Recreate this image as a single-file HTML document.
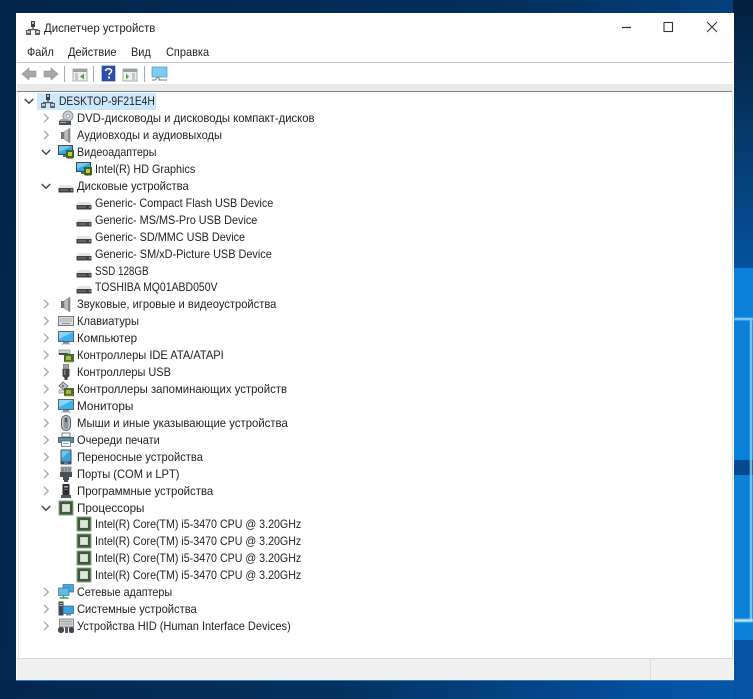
<!DOCTYPE html>
<html lang="ru"><head><meta charset="utf-8"><title>Диспетчер устройств</title>
<style>
html,body{margin:0;padding:0}
body{width:753px;height:699px;overflow:hidden;position:relative;background:linear-gradient(100deg,#03244a 0%,#03305f 60%,#044c94 100%);font:12px "Liberation Sans",sans-serif;color:#222}
.bg{position:absolute}
#win{position:absolute;left:16px;top:13px;width:718px;height:668px;background:#fff}
.t{position:absolute;white-space:nowrap;line-height:16px;height:16px;transform-origin:0 50%}
svg.i{position:absolute;width:16px;height:16px;filter:blur(.35px)}
svg.c{position:absolute;width:8px;height:10px}
.abs{position:absolute}
</style></head><body>
<svg width="0" height="0" style="position:absolute">
<defs>
<symbol id="pc" viewBox="0 0 16 16"><rect x="6" y="1" width="4" height="6" fill="#3a3f46"/><rect x="7" y="2" width="2" height="2" fill="#b8c0c8"/><rect x="7.3" y="7" width="1.4" height="3" fill="#555"/><rect x="3" y="9" width="10" height="1.2" fill="#555"/><rect x="1" y="10" width="5" height="5" fill="#5b6169"/><rect x="10" y="10" width="5" height="5" fill="#5b6169"/><rect x="2" y="11" width="3" height="2" fill="#c8ced4"/><rect x="11" y="11" width="3" height="2" fill="#c8ced4"/></symbol>
<symbol id="dvd" viewBox="0 0 16 16"><circle cx="10" cy="6" r="5" fill="#c9ced2" stroke="#8d9499"/><circle cx="10" cy="6" r="1.6" fill="#f2f4f5" stroke="#858b90" stroke-width=".6"/><path d="M1 11l2-2h7v3H1z" fill="#9aa0a5"/><rect x="1" y="11" width="12" height="4" fill="#4b4f53"/><rect x="2" y="12" width="6" height="1" fill="#a8adb1"/></symbol>
<symbol id="spk" viewBox="0 0 16 16"><path d="M3 5h3v7H3z" fill="#6f7579"/><path d="M6 5l6-4v15l-6-4z" fill="#b7bcc0" stroke="#84898d" stroke-width=".6"/><path d="M10 3v11l2 1.5V2z" fill="#83888c"/></symbol>
<symbol id="vid" viewBox="0 0 16 16"><rect x="0" y="1" width="15" height="10" fill="#3c4a57"/><rect x="1" y="2" width="13" height="8" fill="#35a5e2"/><path d="M1 2h13L1 8z" fill="#77c8ef"/><rect x="5" y="11" width="5" height="2" fill="#5b6d7b"/><rect x="8" y="6" width="8" height="8" fill="#38662f"/><rect x="10" y="8" width="4" height="4" fill="#d6c23d"/><rect x="9" y="14" width="6" height="1" fill="#c2a32d"/></symbol>
<symbol id="hdd" viewBox="0 0 16 16"><path d="M2 7h12l1.500 3v4H.5v-4z" fill="#e3e5e7"/><rect x=".5" y="10" width="15" height="4.500" fill="#3f4347"/><rect x="2" y="11.500" width="8" height="1" fill="#7d8286"/><rect x="13" y="11.500" width="1.500" height="1" fill="#cfd3d5"/></symbol>
<symbol id="kbd" viewBox="0 0 16 16"><rect x=".5" y="3.500" width="15" height="9" fill="#d8dcdf" stroke="#747a7e"/><path d="M2 6h12M2 8h12" stroke="#8d9397" stroke-dasharray="1 .6"/><path d="M4 10.500h8" stroke="#868c90"/></symbol>
<symbol id="mon" viewBox="0 0 16 16"><rect x=".5" y="1.500" width="15" height="10" fill="#3bb2ee" stroke="#5a6670"/><path d="M1 2h14L1 9z" fill="#8cd4f5"/><rect x="5" y="12" width="6" height="1.500" fill="#7e8a93"/><rect x="3" y="13.500" width="10" height="1" fill="#aab2b8"/></symbol>
<symbol id="ide" viewBox="0 0 16 16"><rect x="1" y="3" width="11" height="4" fill="#cdd1d4" stroke="#757b80" stroke-width=".6"/><rect x="1" y="6" width="9" height="2" fill="#44484c"/><rect x="6" y="7" width="10" height="8" fill="#39702f"/><rect x="8" y="9" width="5" height="4" fill="#bcae45"/><path d="M7 15h8" stroke="#c6a62e"/></symbol>
<symbol id="usb" viewBox="0 0 16 16"><rect x="5.500" y="0" width="5" height="5" fill="#9ba1a6" stroke="#555b60" stroke-width=".6"/><path d="M4.500 5h7v7l-2 2v2h-3v-2l-2-2z" fill="#41464a"/><rect x="6" y="6" width="1.500" height="5" fill="#82888d"/></symbol>
<symbol id="sto" viewBox="0 0 16 16"><path d="M1 5l4-4 5 4-4 4z" fill="#c8cdd0" stroke="#4e5458" stroke-width=".8"/><circle cx="5" cy="5" r="1.300" fill="#70767a"/><rect x="1" y="9" width="8" height="3" fill="#d8dbdd" stroke="#666" stroke-width=".5"/><rect x="6" y="7" width="10" height="8" fill="#3b6f33"/><rect x="8" y="9" width="5" height="4" fill="#bca83e"/><path d="M7 15h8" stroke="#c6a62e"/></symbol>
<symbol id="mou" viewBox="0 0 16 16"><rect x="3.500" y=".5" width="9" height="15" rx="4.500" fill="#c5cbcf" stroke="#565c61"/><rect x="5.500" y="2" width="5" height="12" rx="2.500" fill="#8a98a5"/><rect x="7.300" y="3" width="1.400" height="4" fill="#2e3236"/></symbol>
<symbol id="prn" viewBox="0 0 16 16"><rect x="4" y="1" width="8" height="4" fill="#fff" stroke="#5f6569" stroke-width=".8"/><path d="M.5 5.500h15v5h-3V9h-9v1.500h-3z" fill="#4d93ad" stroke="#3e4448" stroke-width=".8"/><rect x="3.500" y="9" width="9" height="5.500" fill="#fff" stroke="#666c70" stroke-width=".8"/><path d="M5 11.500h6" stroke="#9aa"/></symbol>
<symbol id="por" viewBox="0 0 16 16"><rect x="3" y="1" width="10" height="5" fill="#a8adb1" stroke="#62676b" stroke-width=".6"/><path d="M5 2v3M8 2v3M11 2v3" stroke="#5d6267"/><path d="M2 6h12v5h-3v3h-1v2H6v-2H5v-3H2z" fill="#4a4f53"/></symbol>
<symbol id="mob" viewBox="0 0 16 16"><rect x="2.500" y=".5" width="11" height="15" rx="1" fill="#3f4a55"/><rect x="3.500" y="1.500" width="9" height="11" fill="#39a4e0"/><path d="M3.500 1.500h9l-9 8z" fill="#6fc5ee"/><rect x="6" y="13.500" width="4" height="1" fill="#aab"/></symbol>
<symbol id="sw" viewBox="0 0 16 16"><rect x="4.500" y="1" width="7" height="11" fill="#2c3034"/><rect x="6" y="3" width="4" height="1.500" fill="#a9aeb2"/><rect x="6" y="6" width="4" height="1" fill="#6f7478"/><rect x="3" y="12" width="10" height="3" fill="#50565a"/></symbol>
<symbol id="cpu" viewBox="0 0 16 16"><rect x="0.500" y="0.500" width="15" height="15" fill="#8fa08d"/><rect x="1.500" y="1.500" width="13" height="13" fill="#3a5c38"/><rect x="4" y="4" width="8" height="8" fill="#cbd6c7"/><rect x="5" y="5" width="6" height="6" fill="#dfe6dc"/></symbol>
<symbol id="net" viewBox="0 0 16 16"><rect x="5" y="0.500" width="10.500" height="7.500" fill="#3da8e4" stroke="#4a6a80" stroke-width=".7"/><rect x="0.500" y="4" width="10.500" height="7.500" fill="#5cbcec" stroke="#4a6a80" stroke-width=".7"/><path d="M5.500 11.500v2M1.500 14h9" stroke="#3fa34a" stroke-width="1.500"/></symbol>
<symbol id="sys" viewBox="0 0 16 16"><rect x="0.500" y="0.500" width="5" height="14" fill="#42474b"/><rect x="1.500" y="2" width="3" height="1" fill="#b4b9bc"/><rect x="1.500" y="4" width="3" height="1" fill="#b4b9bc"/><rect x="5" y="5" width="10.500" height="7.500" fill="#32a6e6" stroke="#3c5870" stroke-width=".7"/><rect x="8" y="13" width="5" height="1.500" fill="#7a8a96"/></symbol>
<symbol id="hid" viewBox="0 0 16 16"><rect x="1.500" y="1" width="14" height="8" fill="#ccd2d6" stroke="#6f767b" stroke-width=".8"/><path d="M3 3.500h11M3 6h11" stroke="#7c8387" stroke-dasharray="1 .7"/><rect x="0" y="9" width="6" height="6" rx="2.500" fill="#43484c"/><rect x="7" y="9" width="3" height="6" fill="#595f63"/><rect x="11" y="9" width="5" height="6" rx="2" fill="#43484c"/></symbol>
<symbol id="cr" viewBox="0 0 8 10"><path d="M2 .8L6.200 5 2 9.200" fill="none" stroke="#a6a6a6" stroke-width="1.300"/></symbol>
<symbol id="cd" viewBox="0 0 10 8"><path d="M.8 2L5 6.200 9.200 2" fill="none" stroke="#404040" stroke-width="1.400"/></symbol>
</defs></svg>

<div class="bg" style="left:733px;top:0;width:20px;height:268px;background:linear-gradient(180deg,#04203f 0%,#06305a 35%,#05437f 70%,#04539e 100%)"></div>
<div class="bg" style="left:733px;top:268px;width:20px;height:431px;background:#0a80d8"></div>
<div class="bg" style="left:733px;top:460px;width:20px;height:15px;background:#064b92"></div>
<div class="bg" style="left:734px;top:318px;width:19px;height:2px;background:#a8def8;filter:blur(.7px)"></div>
<div class="bg" style="left:750px;top:320px;width:2px;height:300px;background:#8ed6f6;filter:blur(.5px)"></div>
<div class="bg" style="left:734px;top:619px;width:19px;height:3px;background:#b8e6fa;filter:blur(.7px)"></div>
<div class="bg" style="left:0;top:681px;width:753px;height:18px;background:linear-gradient(90deg,#03264e 0%,#03325f 45%,#044f9e 85%,#0657ab 100%)"></div>
<div class="bg" style="left:733px;top:640px;width:20px;height:59px;background:#0552a4"></div>

<div id="win"></div>
<div class="abs" style="left:17px;top:62px;width:716px;height:1px;background:#c4c4c4"></div>
<div class="abs" style="left:17px;top:84px;width:716px;height:7px;background:#e9e9e9"></div>
<div class="abs" style="left:17px;top:91px;width:715px;height:1px;background:#848484"></div>
<div class="abs" style="left:18px;top:92px;width:1px;height:566px;background:#e6e6e6"></div>
<div class="abs" style="left:732px;top:92px;width:1px;height:566px;background:#dedede"></div>
<div class="abs" style="left:17px;top:658px;width:716px;height:22px;background:#f0f0f0;border-top:1px solid #d9d9d9;box-sizing:border-box"></div>
<div class="abs" style="left:650px;top:659px;width:1px;height:21px;background:#dcdcdc"></div>
<div class="abs" style="left:16px;top:680px;width:718px;height:1px;background:#2f7dbd"></div>

<svg class="i" style="left:25px;top:20px"><use href="#pc"/></svg>
<div class="t" style="left:44px;top:20px;transform:scaleX(.949)">Диспетчер устройств</div>
<div class="t" style="left:27px;top:44px;transform:scaleX(.91)">Файл</div>
<div class="t" style="left:68px;top:44px;transform:scaleX(.92)">Действие</div>
<div class="t" style="left:131px;top:44px;transform:scaleX(.91)">Вид</div>
<div class="t" style="left:166px;top:44px;transform:scaleX(.915)">Справка</div>

<svg class="abs" style="left:620px;top:20px" width="100" height="16"><path d="M2 7.500h9" stroke="#2a2a2a" stroke-width="1.200"/><rect x="44" y="2.500" width="8.500" height="9" fill="none" stroke="#333" stroke-width="1.100"/><path d="M87 2l10 10M97 2L87 12" stroke="#333" stroke-width="1.100" fill="none"/></svg>

<svg class="abs" style="left:20px;top:65px;filter:blur(.35px)" width="160" height="18">
<path d="M2 9l7-6v3h7v6H9v3z" fill="#a5a9a9" stroke="#8a8f8f" stroke-width=".6"/>
<path d="M36 9l-7-6v3h-7v6h7v3z" transform="translate(2 0)" fill="#a5a9a9" stroke="#8a8f8f" stroke-width=".6"/>
<path d="M44.500 1v16" stroke="#a8a8a8"/>
<rect x="53" y="4" width="14" height="12" fill="#eef0f0" stroke="#8b8f92" stroke-width=".7"/><rect x="53" y="4" width="14" height="3" fill="#9aa0a5"/><rect x="55" y="8" width="3" height="7" fill="#c4c8ca"/><path d="M60 11.500l4-3v6z" fill="#4fa34c"/>
<path d="M73.500 1v16" stroke="#a8a8a8"/>
<rect x="82" y="1" width="13" height="15" fill="#2d50a8" stroke="#1f3a80" stroke-width=".6"/><path d="M85.500 6c0-3 6-3 6 0 0 2-2.500 2-2.500 4" fill="none" stroke="#fff" stroke-width="1.500"/><rect x="88" y="11.500" width="2" height="2" fill="#fff"/>
<rect x="103" y="4" width="14" height="12" fill="#eef0f0" stroke="#8b8f92" stroke-width=".7"/><rect x="103" y="4" width="14" height="3" fill="#9aa0a5"/><rect x="112" y="8" width="3" height="7" fill="#c4c8ca"/><path d="M109 11.500l-3-3v6z" fill="#4fa34c"/>
<path d="M124.500 1v16" stroke="#a8a8a8"/>
<rect x="132" y="2" width="15" height="10" fill="#7fcdee" stroke="#4e98be" stroke-width=".7"/><path d="M138 12l-3 3h-3M139 12v3h8" stroke="#6f7f88" fill="none"/>
</svg>

<div class="abs" style="left:37px;top:93px;width:119px;height:17px;background:#cce8ff"></div>
<svg class="c" style="left:24px;top:97px;width:10px;height:8px"><use href="#cd"/></svg>
<svg class="i" style="left:40px;top:93px"><use href="#pc"/></svg>
<div class="t" style="left:59px;top:93px;transform:scaleX(.857)">DESKTOP-9F21E4H</div>

<svg class="c" style="left:42px;top:113px"><use href="#cr"/></svg><svg class="i" style="left:58px;top:110px"><use href="#dvd"/></svg><div class="t" style="left:77px;top:110px;transform:scaleX(.94)">DVD-дисководы и дисководы компакт-дисков</div>
<svg class="c" style="left:42px;top:130px"><use href="#cr"/></svg><svg class="i" style="left:58px;top:127px"><use href="#spk"/></svg><div class="t" style="left:77px;top:127px;transform:scaleX(.924)">Аудиовходы и аудиовыходы</div>
<svg class="c" style="left:41px;top:148px;width:10px;height:8px"><use href="#cd"/></svg><svg class="i" style="left:58px;top:144px"><use href="#vid"/></svg><div class="t" style="left:77px;top:144px;transform:scaleX(.89)">Видеоадаптеры</div>
<svg class="i" style="left:76px;top:161px"><use href="#vid"/></svg><div class="t" style="left:95px;top:161px;transform:scaleX(.9)">Intel(R) HD Graphics</div>
<svg class="c" style="left:41px;top:182px;width:10px;height:8px"><use href="#cd"/></svg><svg class="i" style="left:58px;top:178px"><use href="#hdd"/></svg><div class="t" style="left:77px;top:178px;transform:scaleX(.933)">Дисковые устройства</div>
<svg class="i" style="left:76px;top:195px"><use href="#hdd"/></svg><div class="t" style="left:95px;top:195px;transform:scaleX(.9)">Generic- Compact Flash USB Device</div>
<svg class="i" style="left:76px;top:212px"><use href="#hdd"/></svg><div class="t" style="left:95px;top:212px;transform:scaleX(.905)">Generic- MS/MS-Pro USB Device</div>
<svg class="i" style="left:76px;top:229px"><use href="#hdd"/></svg><div class="t" style="left:95px;top:229px;transform:scaleX(.904)">Generic- SD/MMC USB Device</div>
<svg class="i" style="left:76px;top:246px"><use href="#hdd"/></svg><div class="t" style="left:95px;top:246px;transform:scaleX(.908)">Generic- SM/xD-Picture USB Device</div>
<svg class="i" style="left:76px;top:263px"><use href="#hdd"/></svg><div class="t" style="left:95px;top:263px;transform:scaleX(.82)">SSD 128GB</div>
<svg class="i" style="left:76px;top:279px"><use href="#hdd"/></svg><div class="t" style="left:95px;top:279px;transform:scaleX(.872)">TOSHIBA MQ01ABD050V</div>
<svg class="c" style="left:42px;top:299px"><use href="#cr"/></svg><svg class="i" style="left:58px;top:296px"><use href="#spk"/></svg><div class="t" style="left:77px;top:296px;transform:scaleX(.93)">Звуковые, игровые и видеоустройства</div>
<svg class="c" style="left:42px;top:316px"><use href="#cr"/></svg><svg class="i" style="left:58px;top:313px"><use href="#kbd"/></svg><div class="t" style="left:77px;top:313px;transform:scaleX(.925)">Клавиатуры</div>
<svg class="c" style="left:42px;top:333px"><use href="#cr"/></svg><svg class="i" style="left:58px;top:330px"><use href="#mon"/></svg><div class="t" style="left:77px;top:330px;transform:scaleX(.968)">Компьютер</div>
<svg class="c" style="left:42px;top:350px"><use href="#cr"/></svg><svg class="i" style="left:58px;top:347px"><use href="#ide"/></svg><div class="t" style="left:77px;top:347px;transform:scaleX(.925)">Контроллеры IDE ATA/ATAPI</div>
<svg class="c" style="left:42px;top:367px"><use href="#cr"/></svg><svg class="i" style="left:58px;top:364px"><use href="#usb"/></svg><div class="t" style="left:77px;top:364px;transform:scaleX(.913)">Контроллеры USB</div>
<svg class="c" style="left:42px;top:384px"><use href="#cr"/></svg><svg class="i" style="left:58px;top:381px"><use href="#sto"/></svg><div class="t" style="left:77px;top:381px;transform:scaleX(.946)">Контроллеры запоминающих устройств</div>
<svg class="c" style="left:42px;top:401px"><use href="#cr"/></svg><svg class="i" style="left:58px;top:398px"><use href="#mon"/></svg><div class="t" style="left:77px;top:398px;transform:scaleX(.98)">Мониторы</div>
<svg class="c" style="left:42px;top:418px"><use href="#cr"/></svg><svg class="i" style="left:58px;top:415px"><use href="#mou"/></svg><div class="t" style="left:77px;top:415px;transform:scaleX(.946)">Мыши и иные указывающие устройства</div>
<svg class="c" style="left:42px;top:435px"><use href="#cr"/></svg><svg class="i" style="left:58px;top:432px"><use href="#prn"/></svg><div class="t" style="left:77px;top:432px;transform:scaleX(.92)">Очереди печати</div>
<svg class="c" style="left:42px;top:452px"><use href="#cr"/></svg><svg class="i" style="left:58px;top:449px"><use href="#mob"/></svg><div class="t" style="left:77px;top:449px;transform:scaleX(.933)">Переносные устройства</div>
<svg class="c" style="left:42px;top:469px"><use href="#cr"/></svg><svg class="i" style="left:58px;top:466px"><use href="#por"/></svg><div class="t" style="left:77px;top:466px;transform:scaleX(.927)">Порты (COM и LPT)</div>
<svg class="c" style="left:42px;top:486px"><use href="#cr"/></svg><svg class="i" style="left:58px;top:483px"><use href="#sw"/></svg><div class="t" style="left:77px;top:483px;transform:scaleX(.951)">Программные устройства</div>
<svg class="c" style="left:41px;top:504px;width:10px;height:8px"><use href="#cd"/></svg><svg class="i" style="left:58px;top:500px"><use href="#cpu"/></svg><div class="t" style="left:77px;top:500px;transform:scaleX(.97)">Процессоры</div>
<svg class="i" style="left:76px;top:516px"><use href="#cpu"/></svg><div class="t" style="left:95px;top:516px;transform:scaleX(.888)">Intel(R) Core(TM) i5-3470 CPU @ 3.20GHz</div>
<svg class="i" style="left:76px;top:533px"><use href="#cpu"/></svg><div class="t" style="left:95px;top:533px;transform:scaleX(.888)">Intel(R) Core(TM) i5-3470 CPU @ 3.20GHz</div>
<svg class="i" style="left:76px;top:550px"><use href="#cpu"/></svg><div class="t" style="left:95px;top:550px;transform:scaleX(.888)">Intel(R) Core(TM) i5-3470 CPU @ 3.20GHz</div>
<svg class="i" style="left:76px;top:567px"><use href="#cpu"/></svg><div class="t" style="left:95px;top:567px;transform:scaleX(.888)">Intel(R) Core(TM) i5-3470 CPU @ 3.20GHz</div>
<svg class="c" style="left:42px;top:587px"><use href="#cr"/></svg><svg class="i" style="left:58px;top:584px"><use href="#net"/></svg><div class="t" style="left:77px;top:584px;transform:scaleX(.896)">Сетевые адаптеры</div>
<svg class="c" style="left:42px;top:604px"><use href="#cr"/></svg><svg class="i" style="left:58px;top:601px"><use href="#sys"/></svg><div class="t" style="left:77px;top:601px;transform:scaleX(.93)">Системные устройства</div>
<svg class="c" style="left:42px;top:621px"><use href="#cr"/></svg><svg class="i" style="left:58px;top:618px"><use href="#hid"/></svg><div class="t" style="left:77px;top:618px;transform:scaleX(.918)">Устройства HID (Human Interface Devices)</div>
</body></html>
